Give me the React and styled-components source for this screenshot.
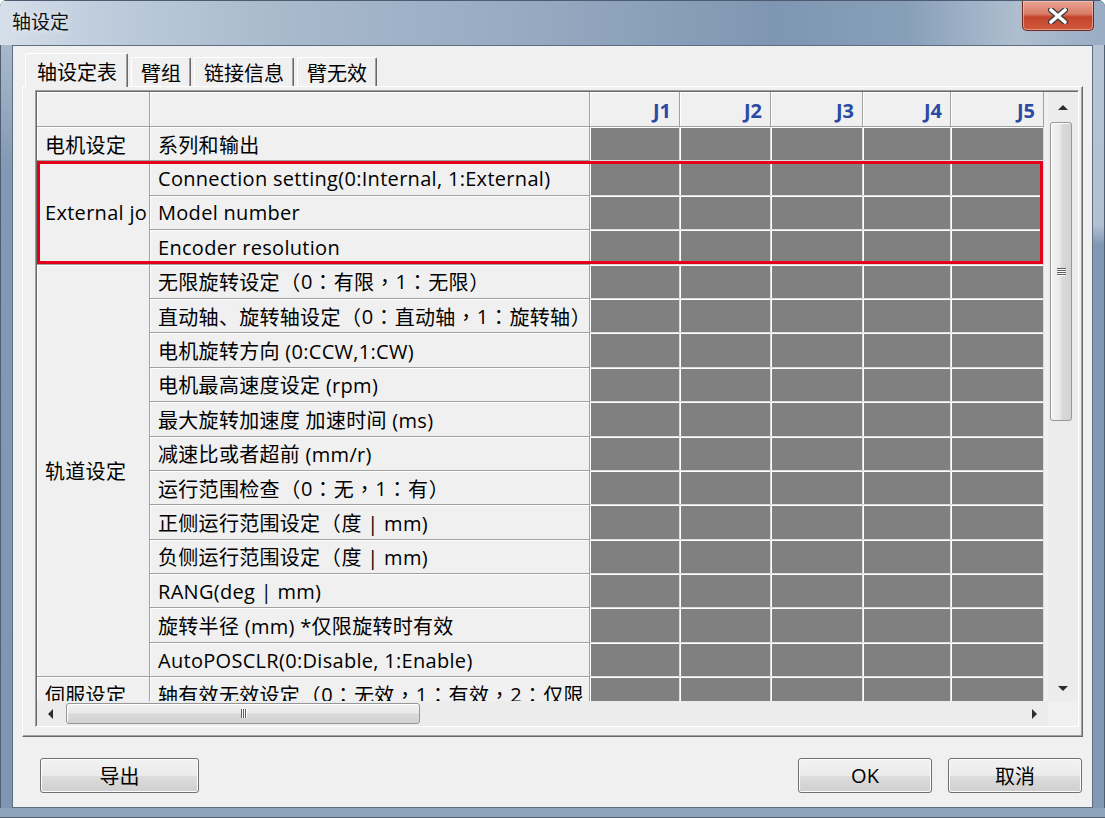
import React from 'react';
import styled, { createGlobalStyle } from 'styled-components';

const GlobalStyle = createGlobalStyle`
  html, body {
    margin: 0;
    padding: 0;
    background: #ffffff;
  }
  body {
    font-family: "Open Sans", "Noto Sans CJK SC", sans-serif;
    color: #000;
    text-spacing-trim: space-all;
  }
  * { box-sizing: border-box; }
`;

const groups = [
  { label: '电机设定', items: ['系列和输出'] },
  {
    label: 'External jo',
    items: ['Connection setting(0:Internal, 1:External)', 'Model number', 'Encoder resolution'],
  },
  {
    label: '轨道设定',
    items: [
      '无限旋转设定（0：有限，1：无限）',
      '直动轴、旋转轴设定（0：直动轴，1：旋转轴）',
      '电机旋转方向 (0:CCW,1:CW)',
      '电机最高速度设定 (rpm)',
      '最大旋转加速度 加速时间 (ms)',
      '减速比或者超前 (mm/r)',
      '运行范围检查（0：无，1：有）',
      '正侧运行范围设定（度 | mm)',
      '负侧运行范围设定（度 | mm)',
      'RANG(deg | mm)',
      '旋转半径 (mm) *仅限旋转时有效',
      'AutoPOSCLR(0:Disable, 1:Enable)',
    ],
  },
  { label: '伺服设定', items: ['轴有效无效设定（0：无效，1：有效，2：仅限'] },
];

const joints = ['J1', 'J2', 'J3', 'J4', 'J5'];
const tabs = ['轴设定表', '臂组', '链接信息', '臂无效'];

// full-width punctuation is drawn centred, as the dialog font does
const withPunct = (text) =>
  text.split(/([（），：])/).map((part, i) =>
    /^[（），：]$/.test(part) ? <Punct key={i}>{part}</Punct> : part
  );

const App = () => {
  let row = 2;
  return (
    <>
      <GlobalStyle />
      <Window>
        <TitleBar>
          <Title>轴设定</Title>
          <CloseButton>
            <svg width="26" height="16" viewBox="0 0 26 16">
              <path d="M6 2 L20 14 M20 2 L6 14" stroke="#3a3a3a" strokeWidth="6" strokeLinecap="round" />
              <path d="M6 2 L20 14 M20 2 L6 14" stroke="#ffffff" strokeWidth="3.6" strokeLinecap="round" />
            </svg>
          </CloseButton>
        </TitleBar>
        <Body>
          <SideFrame />
          <Client>
            <TabStrip>
              {tabs.map((t, i) => (
                <Tab key={t} $active={i === 0}>
                  {t}
                </Tab>
              ))}
            </TabStrip>
            <Panel>
              <GridBox>
                <Viewport>
                  <Table>
                    <HeadCell />
                    <HeadCell />
                    {joints.map((j) => (
                      <HeadCell key={j} $joint>
                        {j}
                      </HeadCell>
                    ))}
                    {groups.map((g) => {
                      const start = row;
                      row += g.items.length;
                      return (
                        <React.Fragment key={g.label}>
                          <TextCell style={{ gridColumn: 1, gridRow: `${start} / span ${g.items.length}` }}>
                            {g.label}
                          </TextCell>
                          {g.items.map((it, k) => (
                            <React.Fragment key={it}>
                              <TextCell style={{ gridColumn: 2, gridRow: start + k }}>{withPunct(it)}</TextCell>
                              {joints.map((j) => (
                                <ValueCell key={j} />
                              ))}
                            </React.Fragment>
                          ))}
                        </React.Fragment>
                      );
                    })}
                  </Table>
                  <Highlight />
                </Viewport>
                <VScroll>
                  <ArrowBtn $h={30}>
                    <Arrow $dir="up" />
                  </ArrowBtn>
                  <VThumb>
                    <GripV>
                      <i />
                      <i />
                      <i />
                      <i />
                    </GripV>
                  </VThumb>
                  <Track />
                  <ArrowBtn $h={26}>
                    <Arrow $dir="down" />
                  </ArrowBtn>
                </VScroll>
                <HScroll>
                  <ArrowBtn $w={27}>
                    <Arrow $dir="left" />
                  </ArrowBtn>
                  <HThumb>
                    <GripH>
                      <i />
                      <i />
                      <i />
                    </GripH>
                  </HThumb>
                  <Track />
                  <ArrowBtn $w={27}>
                    <Arrow $dir="right" />
                  </ArrowBtn>
                </HScroll>
                <Corner />
              </GridBox>
            </Panel>
            <Footer>
              <Button $w={159}>导出</Button>
              <Spacer />
              <Button $w={134}>OK</Button>
              <Button $w={134}>取消</Button>
            </Footer>
          </Client>
          <SideFrame $right />
        </Body>
        <BottomFrame />
      </Window>
    </>
  );
};

export default App;

// STYLED CSS

const Window = styled.div`
  width: 1105px;
  height: 818px;
  display: flex;
  flex-direction: column;
  border-radius: 7px 7px 0 0;
  overflow: hidden;
  background: #8a9fb8;
  box-shadow: inset 0 0 0 1px #5a6a7e;
`;

const TitleBar = styled.div`
  height: 45px;
  flex: none;
  display: flex;
  align-items: flex-start;
  justify-content: space-between;
  padding: 0 11px 0 12px;
  background: linear-gradient(
    to right,
    #d6e0ea 0%,
    #c0cede 8%,
    #a8b9cc 26%,
    #98abc2 46%,
    #7f96b2 70%,
    #889fba 82%,
    #aebecf 92%,
    #98acc3 100%
  );
  border-top: 1px solid #4d5c70;
`;

const Title = styled.div`
  font-family: "Noto Sans CJK SC", sans-serif;
  font-size: 19px;
  line-height: 19px;
  margin-top: 10px;
  color: #101010;
  text-shadow: 0 0 6px rgba(255, 255, 255, 0.9);
`;

const CloseButton = styled.div`
  width: 72px;
  height: 30px;
  display: flex;
  align-items: center;
  justify-content: center;
  border: 1px solid #6e2a20;
  border-top: none;
  border-radius: 0 0 5px 5px;
  background: linear-gradient(#e8a593 0%, #d87a66 45%, #c3432c 55%, #cf5a3c 100%);
  box-shadow: inset 0 0 0 1px rgba(255, 210, 200, 0.5);
`;

const Body = styled.div`
  flex: 1;
  display: flex;
`;

const SideFrame = styled.div`
  width: 12px;
  flex: none;
  background: ${(p) =>
    p.$right
      ? 'linear-gradient(#b6c4d4 0, #b2c1d2 180px, #8197b2 200px, #8398b2 100%)'
      : 'linear-gradient(#a9b9cb 0, #8399b3 120px, #7f95b0 100%)'};
  box-shadow: ${(p) => (p.$right ? 'inset -1px 0 0 #4f5f73' : 'inset 1px 0 0 #4f5f73')};
`;

const BottomFrame = styled.div`
  height: 10px;
  flex: none;
  background: #8ea3bc;
  box-shadow: inset 0 -1px 0 #4f5f73;
`;

const Client = styled.div`
  width: 1081px;
  height: 763px;
  display: flex;
  flex-direction: column;
  padding: 0 9px;
  background: #f0f0f0;
  border: 1px solid #5d6d82;
`;

const TabStrip = styled.div`
  height: 40px;
  flex: none;
  display: flex;
  align-items: flex-end;
  gap: 3px;
  padding-left: 3px;
  position: relative;
  z-index: 1;
`;

const Tab = styled.div`
  height: ${(p) => (p.$active ? '34px' : '29px')};
  margin-bottom: ${(p) => (p.$active ? '-1px' : '0')};
  padding: 0 ${(p) => (p.$active ? '10px 0 11px' : '9px')};
  display: flex;
  align-items: center;
  justify-content: center;
  font-family: "Noto Sans CJK SC", sans-serif;
  font-size: 20px;
  background: #f0f0f0;
  border-top: 1px solid #ffffff;
  border-left: 1px solid #ffffff;
  border-right: 1px solid #696969;
  box-shadow: inset -1px 0 0 #a0a0a0;
  border-radius: 2px 2px 0 0;
  ${(p) => (p.$active ? 'padding-top: 2px;' : 'padding-top: 1px;')}
`;

const Panel = styled.div`
  height: 651px;
  flex: none;
  display: flex;
  padding: 3px 3px 9px 12px;
  border: 1px solid;
  border-color: #ffffff #696969 #696969 #ffffff;
  box-shadow: inset -1px -1px 0 #a0a0a0;
`;

const GridBox = styled.div`
  flex: 1;
  display: grid;
  grid-template-columns: 1fr 30px;
  grid-template-rows: 1fr 25px;
  border: 1px solid;
  border-color: #a0a0a0 #ffffff #ffffff #a0a0a0;
  box-shadow: inset 1px 1px 0 #696969;
  padding: 1px 0 0 1px;
  background: #f0f0f0;
`;

const Viewport = styled.div`
  position: relative;
  overflow: hidden;
  background: #f0f0f0;
`;

const Table = styled.div`
  display: grid;
  grid-template-columns: 113px 440px 90px 91px 92px 88px 93px;
  grid-template-rows: 35px repeat(17, 34.4px);
  width: 1007px;
  font-size: 20px;
  letter-spacing: 0.3px;
`;

const Punct = styled.span`
  font-family: "Noto Sans CJK TC", sans-serif;
  margin: 0 0.4px;
`;

const CellBase = styled.div`
  display: flex;
  align-items: center;
  overflow: hidden;
  white-space: pre;
  border-right: 1px solid #a0a0a0;
  border-bottom: 1px solid #a0a0a0;
  box-shadow: inset 1px 1px 0 #ffffff;
`;

const HeadCell = styled(CellBase)`
  background: #f0f0f0;
  justify-content: flex-end;
  padding-right: 8px;
  padding-top: 2px;
  color: #2a4aa6;
  font-weight: 700;
  letter-spacing: 0;
`;

const TextCell = styled(CellBase)`
  background: #f0f0f0;
  padding-left: 8px;
  padding-top: 1px;
`;

const ValueCell = styled(CellBase)`
  background: #808080;
  border-right-color: #dcdcdc;
  border-bottom-color: #dcdcdc;
`;

const Highlight = styled.div`
  position: absolute;
  left: 0;
  top: 69px;
  width: 1006px;
  height: 103px;
  border: 3px solid #e2001a;
  pointer-events: none;
`;

const VScroll = styled.div`
  grid-row: 1;
  grid-column: 2;
  display: flex;
  flex-direction: column;
  background: #ececec;
`;

const HScroll = styled.div`
  grid-row: 2;
  grid-column: 1;
  display: flex;
  background: #ececec;
`;

const Corner = styled.div`
  background: #f0f0f0;
`;

const Track = styled.div`
  flex: 1;
`;

const ArrowBtn = styled.div`
  flex: none;
  ${(p) => (p.$h ? `height: ${p.$h}px;` : '')}
  ${(p) => (p.$w ? `width: ${p.$w}px;` : '')}
  display: flex;
  align-items: center;
  justify-content: center;
`;

const arrows = {
  up: 'border-left: 5px solid transparent; border-right: 5px solid transparent; border-bottom: 5px solid #2e2e2e;',
  down: 'border-left: 5px solid transparent; border-right: 5px solid transparent; border-top: 5px solid #2e2e2e;',
  left: 'border-top: 5px solid transparent; border-bottom: 5px solid transparent; border-right: 5px solid #2e2e2e;',
  right: 'border-top: 5px solid transparent; border-bottom: 5px solid transparent; border-left: 5px solid #2e2e2e;',
};

const Arrow = styled.span`
  width: 0;
  height: 0;
  ${(p) => arrows[p.$dir]}
`;

const VThumb = styled.div`
  flex: none;
  height: 299px;
  width: 22px;
  margin-left: 2px;
  border: 1px solid #979797;
  border-radius: 3px;
  background: linear-gradient(to right, #f3f3f3 0%, #e9e9e9 45%, #d9d9d9 55%, #d3d3d3 100%);
  box-shadow: inset 1px 1px 0 #fff;
  display: flex;
  align-items: center;
  justify-content: center;
`;

const GripV = styled.div`
  display: flex;
  flex-direction: column;
  gap: 1px;
  i {
    display: block;
    width: 9px;
    height: 1px;
    background: #5e5e5e;
    box-shadow: 0 1px 0 #fff;
  }
`;

const HThumb = styled.div`
  flex: none;
  width: 354px;
  height: 21px;
  margin: 2px 0 0 2px;
  border: 1px solid #979797;
  border-radius: 3px;
  background: linear-gradient(#f3f3f3 0%, #e9e9e9 45%, #d9d9d9 55%, #d3d3d3 100%);
  box-shadow: inset 1px 1px 0 #fff;
  display: flex;
  align-items: center;
  justify-content: center;
`;

const GripH = styled.div`
  display: flex;
  gap: 1px;
  i {
    display: block;
    width: 1px;
    height: 9px;
    background: #5e5e5e;
    box-shadow: 1px 0 0 #fff;
  }
`;

const Footer = styled.div`
  flex: 1;
  display: flex;
  align-items: flex-start;
  gap: 16px;
  padding: 21px 1px 0 18px;
`;

const Spacer = styled.div`
  flex: 1;
`;

const Button = styled.div`
  width: ${(p) => p.$w}px;
  height: 35px;
  display: flex;
  align-items: center;
  justify-content: center;
  font-size: 20px;
  font-family: "Open Sans", "Noto Sans CJK SC", sans-serif;
  border: 1px solid #707070;
  border-radius: 3px;
  background: linear-gradient(#f2f2f2 0%, #ebebeb 50%, #dddddd 51%, #cfcfcf 100%);
  box-shadow: inset 0 0 0 1px #fcfcfc;
  color: #000;
`;
